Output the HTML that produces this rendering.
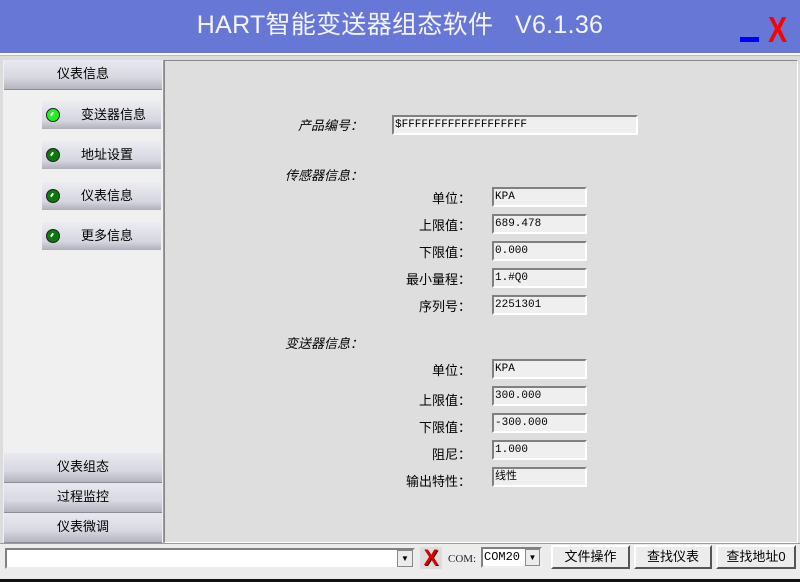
<!DOCTYPE html><html><head><meta charset="utf-8"><style>
*{margin:0;padding:0;box-sizing:border-box}
body{width:800px;height:582px;background:#dcdcdc;position:relative;overflow:hidden;font-family:"Liberation Sans","Noto Sans CJK SC",sans-serif;font-size:12px;color:#000}
.a{position:absolute}
.title{left:0;top:0;width:800px;height:53px;background:#6777d6;color:#f4f4ff;font-size:25px;text-align:center;line-height:50px;letter-spacing:0.3px}
.sb{left:3px;top:60px;width:161px;height:483px;background:#f0f0f0;border-right:1px solid #999}
.hb{left:4px;width:158px;height:30px;background:linear-gradient(#e8e8f0,#d8d8e2 60%,#b4b4c0);border-bottom:1px solid #8c8c98;text-align:center;line-height:28px;font-size:13px}
.ib{left:42px;width:119px;height:28px;background:linear-gradient(#ececf2,#d6d6e0 70%,#b0b0bc);line-height:28px;font-size:13px}
.ib span{position:absolute;left:39px}
.led{position:absolute;left:4px;top:7px;width:14px;height:14px;border-radius:50%;border:1px solid #222;background:#0a7a0a}
.led.on{background:#22ee22}
.led:after{content:"";position:absolute;left:4px;top:3px;width:2px;height:4px;background:#fff;transform:rotate(35deg)}
.panel{left:164px;top:60px;width:634px;height:483px;border:1px solid #888;border-right-color:#fff;border-bottom-color:#fff;background:#dedede}
.lb{text-align:right;width:124px;font-size:13px}
.f{background:#efefef;border:2px solid #fff;border-top-color:#808080;border-left-color:#808080;font-family:"Liberation Mono","Noto Sans CJK SC",monospace;font-size:11px;padding-left:1px;padding-top:1px;line-height:14px;height:20px;width:95px}
.it{font-style:italic;font-size:13px}
.btn{top:545px;height:24px;background:#ececec;border:2px solid #fff;border-right-color:#555;border-bottom-color:#555;text-align:center;line-height:19px;font-size:13px}
</style></head><body>
<div class="a title">HART智能变送器组态软件&nbsp;&nbsp; V6.1.36</div>
<div class="a" style="left:740px;top:37px;width:19px;height:5px;background:#0000ff"></div>
<div class="a" style="left:768px;top:12px;color:#ff0000;font-size:36px;font-weight:bold;line-height:36px;transform:scaleX(0.8);transform-origin:left">X</div>
<div class="a" style="left:0;top:53px;width:800px;height:3px;background:#fff;border-bottom:1px solid #bbb"></div>
<div class="a sb"></div>
<div class="a hb" style="top:60px">仪表信息</div>
<div class="a ib" style="top:101px"><i class="led on"></i><span>变送器信息</span></div>
<div class="a ib" style="top:141px"><i class="led"></i><span>地址设置</span></div>
<div class="a ib" style="top:182px"><i class="led"></i><span>仪表信息</span></div>
<div class="a ib" style="top:222px"><i class="led"></i><span>更多信息</span></div>
<div class="a hb" style="top:453px">仪表组态</div>
<div class="a hb" style="top:483px">过程监控</div>
<div class="a hb" style="top:513px">仪表微调</div>
<div class="a panel"></div>
<div class="a it" style="left:298px;top:115px">产品编号：</div>
<div class="a f" style="left:392px;top:115px;width:246px">$FFFFFFFFFFFFFFFFFFF</div>
<div class="a it" style="left:285px;top:165px">传感器信息：</div>
<div class="a lb" style="left:347px;top:188px">单位：</div><div class="a f" style="left:492px;top:187px">KPA</div>
<div class="a lb" style="left:347px;top:215px">上限值：</div><div class="a f" style="left:492px;top:214px">689.478</div>
<div class="a lb" style="left:347px;top:242px">下限值：</div><div class="a f" style="left:492px;top:241px">0.000</div>
<div class="a lb" style="left:347px;top:269px">最小量程：</div><div class="a f" style="left:492px;top:268px">1.#Q0</div>
<div class="a lb" style="left:347px;top:296px">序列号：</div><div class="a f" style="left:492px;top:295px">2251301</div>
<div class="a it" style="left:285px;top:333px">变送器信息：</div>
<div class="a lb" style="left:347px;top:360px">单位：</div><div class="a f" style="left:492px;top:359px">KPA</div>
<div class="a lb" style="left:347px;top:390px">上限值：</div><div class="a f" style="left:492px;top:386px">300.000</div>
<div class="a lb" style="left:347px;top:417px">下限值：</div><div class="a f" style="left:492px;top:413px">-300.000</div>
<div class="a lb" style="left:347px;top:444px">阻尼：</div><div class="a f" style="left:492px;top:440px">1.000</div>
<div class="a lb" style="left:347px;top:471px">输出特性：</div><div class="a f" style="left:492px;top:467px">线性</div>
<div class="a" style="left:0;top:543px;width:800px;height:39px;background:#ececec;border-top:1px solid #999"></div>
<div class="a" style="left:5px;top:548px;width:410px;height:21px;background:#fff;border:2px solid #808080;border-right-color:#eee;border-bottom-color:#eee"></div>
<div class="a" style="left:397px;top:550px;width:16px;height:17px;background:#ececec;border:1px solid #888;font-size:8px;text-align:center;line-height:16px">▼</div>
<div class="a" style="left:420px;top:547px;width:22px;height:22px;background:#ddd;color:#d00;font-weight:bold;font-size:22px;line-height:22px;text-align:center;text-shadow:1px 1px #400">X</div>
<div class="a" style="left:448px;top:553px;font-family:'Liberation Serif',serif;font-size:11px;color:#223">COM:</div>
<div class="a" style="left:481px;top:547px;width:61px;height:21px;background:#fff;border:2px solid #808080;border-right-color:#eee;border-bottom-color:#eee;font-family:'Liberation Mono',monospace;font-size:12px;line-height:17px;padding-left:1px">COM20</div>
<div class="a" style="left:525px;top:549px;width:15px;height:17px;background:#ececec;border:1px solid #888;font-size:8px;text-align:center;line-height:16px">▼</div>
<div class="a btn" style="left:551px;width:79px">文件操作</div>
<div class="a btn" style="left:634px;width:78px">查找仪表</div>
<div class="a btn" style="left:716px;width:80px">查找地址0</div>
<div class="a" style="left:0;top:579px;width:800px;height:3px;background:#111"></div>
</body></html>
